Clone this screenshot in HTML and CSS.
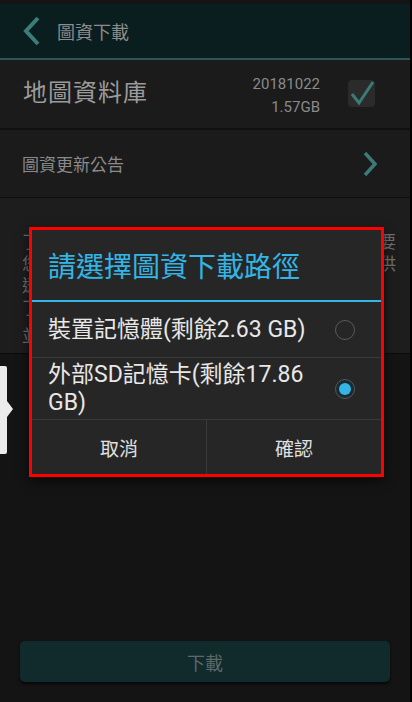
FILE: index.html
```html
<!DOCTYPE html>
<html>
<head>
<meta charset="utf-8">
<title>圖資下載</title>
<link rel="stylesheet" href="styles.css">
</head>
<body>
<div class="screen">
	<div class="header">
		<svg class="back" width="18" height="30" viewBox="0 0 18 30"><polyline points="15,2 3,15 15,28" fill="none" stroke="#3d7c78" stroke-width="4"/></svg>
		<span class="title">圖資下載</span>
	</div>

	<div class="row db">
		<span class="db-name">地圖資料庫</span>
		<div class="db-meta">
			<div>20181022</div>
			<div>1.57GB</div>
		</div>
		<div class="check">
			<svg width="27" height="27" viewBox="0 0 27 27"><polyline points="4,14 11,23 25,2" fill="none" stroke="#3c7a78" stroke-width="3"/></svg>
		</div>
	</div>

	<div class="row notice-link">
		<span>圖資更新公告</span>
		<svg width="16" height="26" viewBox="0 0 16 26"><polyline points="3,2 13,13 3,24" fill="none" stroke="#3c7a78" stroke-width="3.5"/></svg>
	</div>

	<div class="notice">
		<p>了讓您能順利使用離線導航功能，本應用程式需要</p>
		<p>您下載圖資檔案，檔案較大建議使用無線網路提供</p>
		<p>透過無線網路下載以節省行動數據。</p>
		<p>了解更多請參閱說明。</p>
		<p class="last">並確認裝置有足夠的儲存空間。</p>
	</div>

	<div class="lower">
		<div class="handle"></div>
		<div class="download">下載</div>
	</div>

	<div class="dialog">
		<div class="dlg-title">請選擇圖資下載路徑</div>
		<div class="option">
			<span class="opt-text">裝置記憶體(剩餘2.63 GB)</span>
			<span class="radio"></span>
		</div>
		<div class="option two">
			<span class="opt-text">外部SD記憶卡(剩餘17.86 GB)</span>
			<span class="radio on"></span>
		</div>
		<div class="buttons">
			<div class="btn">取消</div>
			<div class="btn">確認</div>
		</div>
	</div>
</div>
</body>
</html>
```

FILE: styles.css
```css
*{margin:0; padding:0; box-sizing:border-box;}
body{background:#000; font-family:Roboto, "Noto Sans CJK TC", sans-serif;}
.screen{position:relative; width:410px; height:702px; padding-top:4px; background:#141414; display:flex; flex-direction:column;}

.header{height:56px; background:#0a1e1f; border-bottom:2px solid #2c5656; display:flex; align-items:center; padding-left:23px;}
.header .back{margin-right:16px;}
.header .title{font-size:18px; color:#8c8c8c;}

.row{display:flex; align-items:center; background:#1b1b1b;}
.db{height:70px; padding-left:23px; border-bottom:2px solid #101010;}
.db-name{font-size:24px; color:#9b9b9b; letter-spacing:1px; flex:1; margin-bottom:8px;}
.db-meta{font-size:15px; line-height:23px; color:#8a8a8a; text-align:right; margin-right:28px; margin-top:4px;}
.check{width:27px; height:27px; background:#2b2b2b; border-radius:4px; margin-right:35px; margin-bottom:2px;}
.check svg{display:block;}

.notice-link{height:68px; padding-left:22px; justify-content:space-between; padding-right:32px; border-bottom:1px solid #0e0e0e;}
.notice-link span{font-size:17px; color:#8a8a8a;}

.notice{height:156px; background:#1d1d1d; padding:33px 0 0 22px; border-bottom:1px solid #0b0b0b; overflow:hidden;}
.notice p{font-size:17px; line-height:22px; color:#707070; white-space:nowrap; overflow:hidden;}
.notice p.last{margin-top:6px;}

.lower{flex:1; position:relative; display:flex; flex-direction:column; justify-content:flex-end; padding:0 20px 20px;}
.handle{position:absolute; left:0; top:12px; width:7px; height:88px; background:#ececec; border-radius:0 2px 2px 0;}
.handle:after{content:''; position:absolute; left:7px; top:35px; border:8px solid transparent; border-left:6px solid #ececec; border-right:0;}
.download{height:41px; border-radius:5px; background:#112b2d; color:#5e6868; font-size:18px; display:flex; align-items:center; justify-content:center; box-shadow:0 2px 3px rgba(0,0,0,.7);}

.dialog{position:absolute; left:29px; top:227px; width:355px; height:250px; border:3px solid #ff0000; background:#262626; box-shadow:0 4px 10px rgba(0,0,0,.6); display:flex; flex-direction:column;}
.dlg-title{height:72px; border-bottom:2px solid #33b5e5; color:#33b5e5; font-size:28px; padding-left:16px; display:flex; align-items:center;}
.option{height:56px; border-bottom:1px solid #3a3a3a; display:flex; align-items:center; padding:0 26px 0 16px; justify-content:space-between;}
.option.two{height:62px;}
.opt-text{font-size:23px; line-height:28px; color:#e8e8e8; width:276px;}
.radio{width:20px; height:20px; border:1px solid #5a5a5a; border-radius:50%; flex:none; position:relative;}
.radio.on{background:#1c2a30; border-color:#4d5a60;}
.radio.on:after{content:''; position:absolute; left:3px; top:3px; width:12px; height:12px; border-radius:50%; background:#33b5e5;}
.buttons{flex:1; display:flex;}
.btn{flex:1; display:flex; align-items:center; justify-content:center; font-size:19px; color:#e0e0e0;}
.btn + .btn{border-left:1px solid #3a3a3a;}
```
